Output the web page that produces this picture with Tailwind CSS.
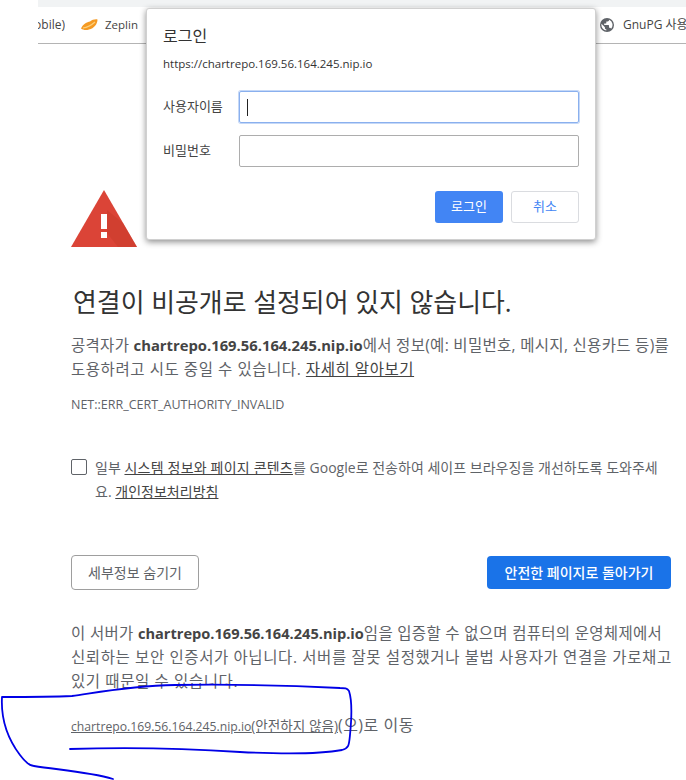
<!DOCTYPE html>
<html lang="ko">
<head>
  <meta charset="UTF-8" />
  <meta name="viewport" content="width=device-width, initial-scale=1.0"/>
  <title>개인정보 보호 오류</title>
  <script src="https://cdn.jsdelivr.net/npm/@tailwindcss/browser@4"></script>
</head>
<body class="relative w-[686px] h-[780px] overflow-hidden bg-white text-[#5f6368] font-['Open_Sans','Noto_Sans_CJK_KR',sans-serif]">

  <!-- Browser chrome -->
  <div class="ml-[38px] h-[7px] bg-[#f1f3f4]"></div>
  <div class="ml-[38px] h-[37px] flex items-center border-b border-[#b4b4b4] text-[12px] text-[#444] overflow-hidden">
    <div class="w-[27px] shrink-0 overflow-hidden flex justify-end"><span class="shrink-0">(Mobile)</span></div>
    <svg class="ml-[16px] w-[17px] h-[12px] shrink-0" viewBox="0 0 17 12">
      <path d="M0 9.500 C2 5 6 3 9 2.500 C11 1 14 0 16.500 0.500 C16.500 5 13 9.500 8 10.500 C5 11.500 2 11 0 9.500Z" fill="#f59a23"/>
      <path d="M2 9 C6 8.500 10 6.500 14 3" stroke="#fcd07a" stroke-width="1.200" fill="none"/>
    </svg>
    <span class="ml-[7px] text-[11.500px] shrink-0 w-[33px]">Zeplin</span>
    <svg class="ml-[462px] w-[14px] h-[14px] shrink-0" viewBox="0 0 24 24">
      <path fill="#5f6368" d="M12 0a12 12 0 1 0 0 24a12 12 0 0 0 0-24zM10.800 21.500A9.600 9.600 0 0 1 2.600 10l5.800 5.800v1.200c0 1.300 1 2.400 2.400 2.400zM19 18.400c-.3-1-1.200-1.600-2.300-1.600h-1.200v-3.600c0-.7-.5-1.200-1.200-1.200H7.200V9.600h2.400c.7 0 1.200-.5 1.200-1.200V6h2.400c1.300 0 2.400-1.100 2.400-2.400v-.5a9.600 9.600 0 0 1 3.400 15.300z"/>
    </svg>
    <span class="ml-[9px] shrink-0 whitespace-nowrap">GnuPG 사용</span>
  </div>

  <!-- Interstitial -->
  <main class="pl-[71px] w-[671px]">
    <svg class="mt-[146px] w-[66px] h-[57px]" viewBox="0 0 66 57">
      <path d="M33 0 L66 57 H0 Z" fill="#db4437"/>
      <path d="M36 43 L47 57 H66 L52 33 L36 20 Z" fill="#c53929" fill-opacity=".45"/>
      <rect x="30" y="24" width="6" height="15" fill="#fff"/>
      <rect x="30" y="42" width="6" height="6" fill="#fff"/>
    </svg>

    <h1 class="mt-[37px] pl-[2px] text-[25.900px] leading-[36px] text-[#333] whitespace-nowrap">연결이 비공개로 설정되어 있지 않습니다.</h1>

    <p class="mt-[13px] text-[15.500px] leading-[24px] tracking-[0.3px] whitespace-nowrap">공격자가 <b class="text-[14.800px] tracking-normal text-[#444]">chartrepo.169.56.164.245.nip.io</b>에서 정보(예: 비밀번호, 메시지, 신용카드 등)를<br><span class="tracking-[0.55px]">도용하려고 시도 중일 수 있습니다. <a class="underline text-[#444]" href="#">자세히 알아보기</a></span></p>

    <p class="mt-[15px] text-[12.500px] leading-[18px]">NET::ERR_CERT_AUTHORITY_INVALID</p>

    <div class="mt-[42px] flex items-start">
      <div class="mt-[3px] w-[16px] h-[16px] shrink-0 rounded-[2px] border border-[#5f6368]"></div>
      <p class="ml-[8px] text-[14px] leading-[24px] tracking-[0.02px] whitespace-nowrap">일부 <a class="underline tracking-[0.2px] text-[#444]" href="#">시스템 정보와 페이지 콘텐츠</a>를 Google로 전송하여 세이프 브라우징을 개선하도록 도와주세<br>요. <a class="underline text-[#444]" href="#">개인정보처리방침</a></p>
    </div>

    <div class="mt-[51px] flex items-center justify-between">
      <button class="w-[128px] h-[35px] rounded-[4px] border border-[#9e9e9e] bg-white text-[14px] text-[#5f6368]">세부정보 숨기기</button>
      <button class="w-[184px] h-[33px] rounded-[4px] bg-[#1a73e8] text-[14px] font-medium text-white">안전한 페이지로 돌아가기</button>
    </div>

    <p class="mt-[31px] text-[15.500px] leading-[24px] tracking-[0.3px] whitespace-nowrap">이 서버가 <b class="text-[14.600px] tracking-normal text-[#444]">chartrepo.169.56.164.245.nip.io</b>임을 입증할 수 없으며 컴퓨터의 운영체제에서<br><span class="tracking-[0.6px]">신뢰하는 보안 인증서가 아닙니다. 서버를 잘못 설정했거나 불법 사용자가 연결을 가로채고<br>있기 때문일 수 있습니다.</span></p>

    <p class="mt-[20px] text-[16px] leading-[24px] tracking-[0.5px] whitespace-nowrap"><a class="underline tracking-normal" href="#"><span class="text-[12.200px]">chartrepo.169.56.164.245.nip.io</span><span class="text-[13.600px]">(안전하지 않음)</span></a>(으)로 이동</p>
  </main>

  <!-- Auth dialog -->
  <div class="absolute left-[146px] top-[8px] w-[450px] h-[232px] rounded-[3px] bg-white border border-[#d0d0d0] shadow-[0_2px_6px_rgba(0,0,0,0.45)] pl-[16px] pr-[16px] pt-[16px] text-[#333]">
    <h2 class="text-[16px] leading-[22px]">로그인</h2>
    <p class="mt-[8px] text-[11.500px] leading-[18px]">https://chartrepo.169.56.164.245.nip.io</p>
    <div class="mt-[18px] flex items-center">
      <label class="w-[76px] text-[13px] text-[#444]">사용자이름</label>
      <div class="flex-1 h-[32px] rounded-[2px] border border-[#8ab0ee] shadow-[0_0_0_1px_#c5d8f7] flex items-center pl-[7px]">
        <span class="w-px h-[17px] bg-[#222]"></span>
      </div>
    </div>
    <div class="mt-[12px] flex items-center">
      <label class="w-[76px] text-[13px] text-[#444]">비밀번호</label>
      <div class="flex-1 h-[32px] rounded-[2px] border border-[#adadad]"></div>
    </div>
    <div class="mt-[24px] flex justify-end gap-[8px]">
      <button class="w-[68px] h-[32px] rounded-[3px] bg-[#4285f4] text-[13px] text-white">로그인</button>
      <button class="w-[68px] h-[32px] rounded-[3px] border border-[#dadce0] bg-white text-[13px] text-[#4285f4]">취소</button>
    </div>
  </div>

  <!-- Hand-drawn annotation -->
  <svg class="absolute left-0 top-0 pointer-events-none" width="686" height="780" viewBox="0 0 686 780" fill="none" stroke="#0000e6" stroke-width="1.800" stroke-linecap="round" stroke-linejoin="round">
    <path d="M70 749 C130 747 180 748 240 752 C280 754 320 754 342 750 C349 748 349 745 350 735 C352 715 352 700 349 691 C347 688 345 688 340 688 C300 686 240 684 175 685 C130 686 100 692 72 696 C50 697 20 697 2 697 C1 715 5 735 20 755 C26 763 30 766 34 766 C60 770 90 772 113 779"/>
  </svg>
</body>
</html>
